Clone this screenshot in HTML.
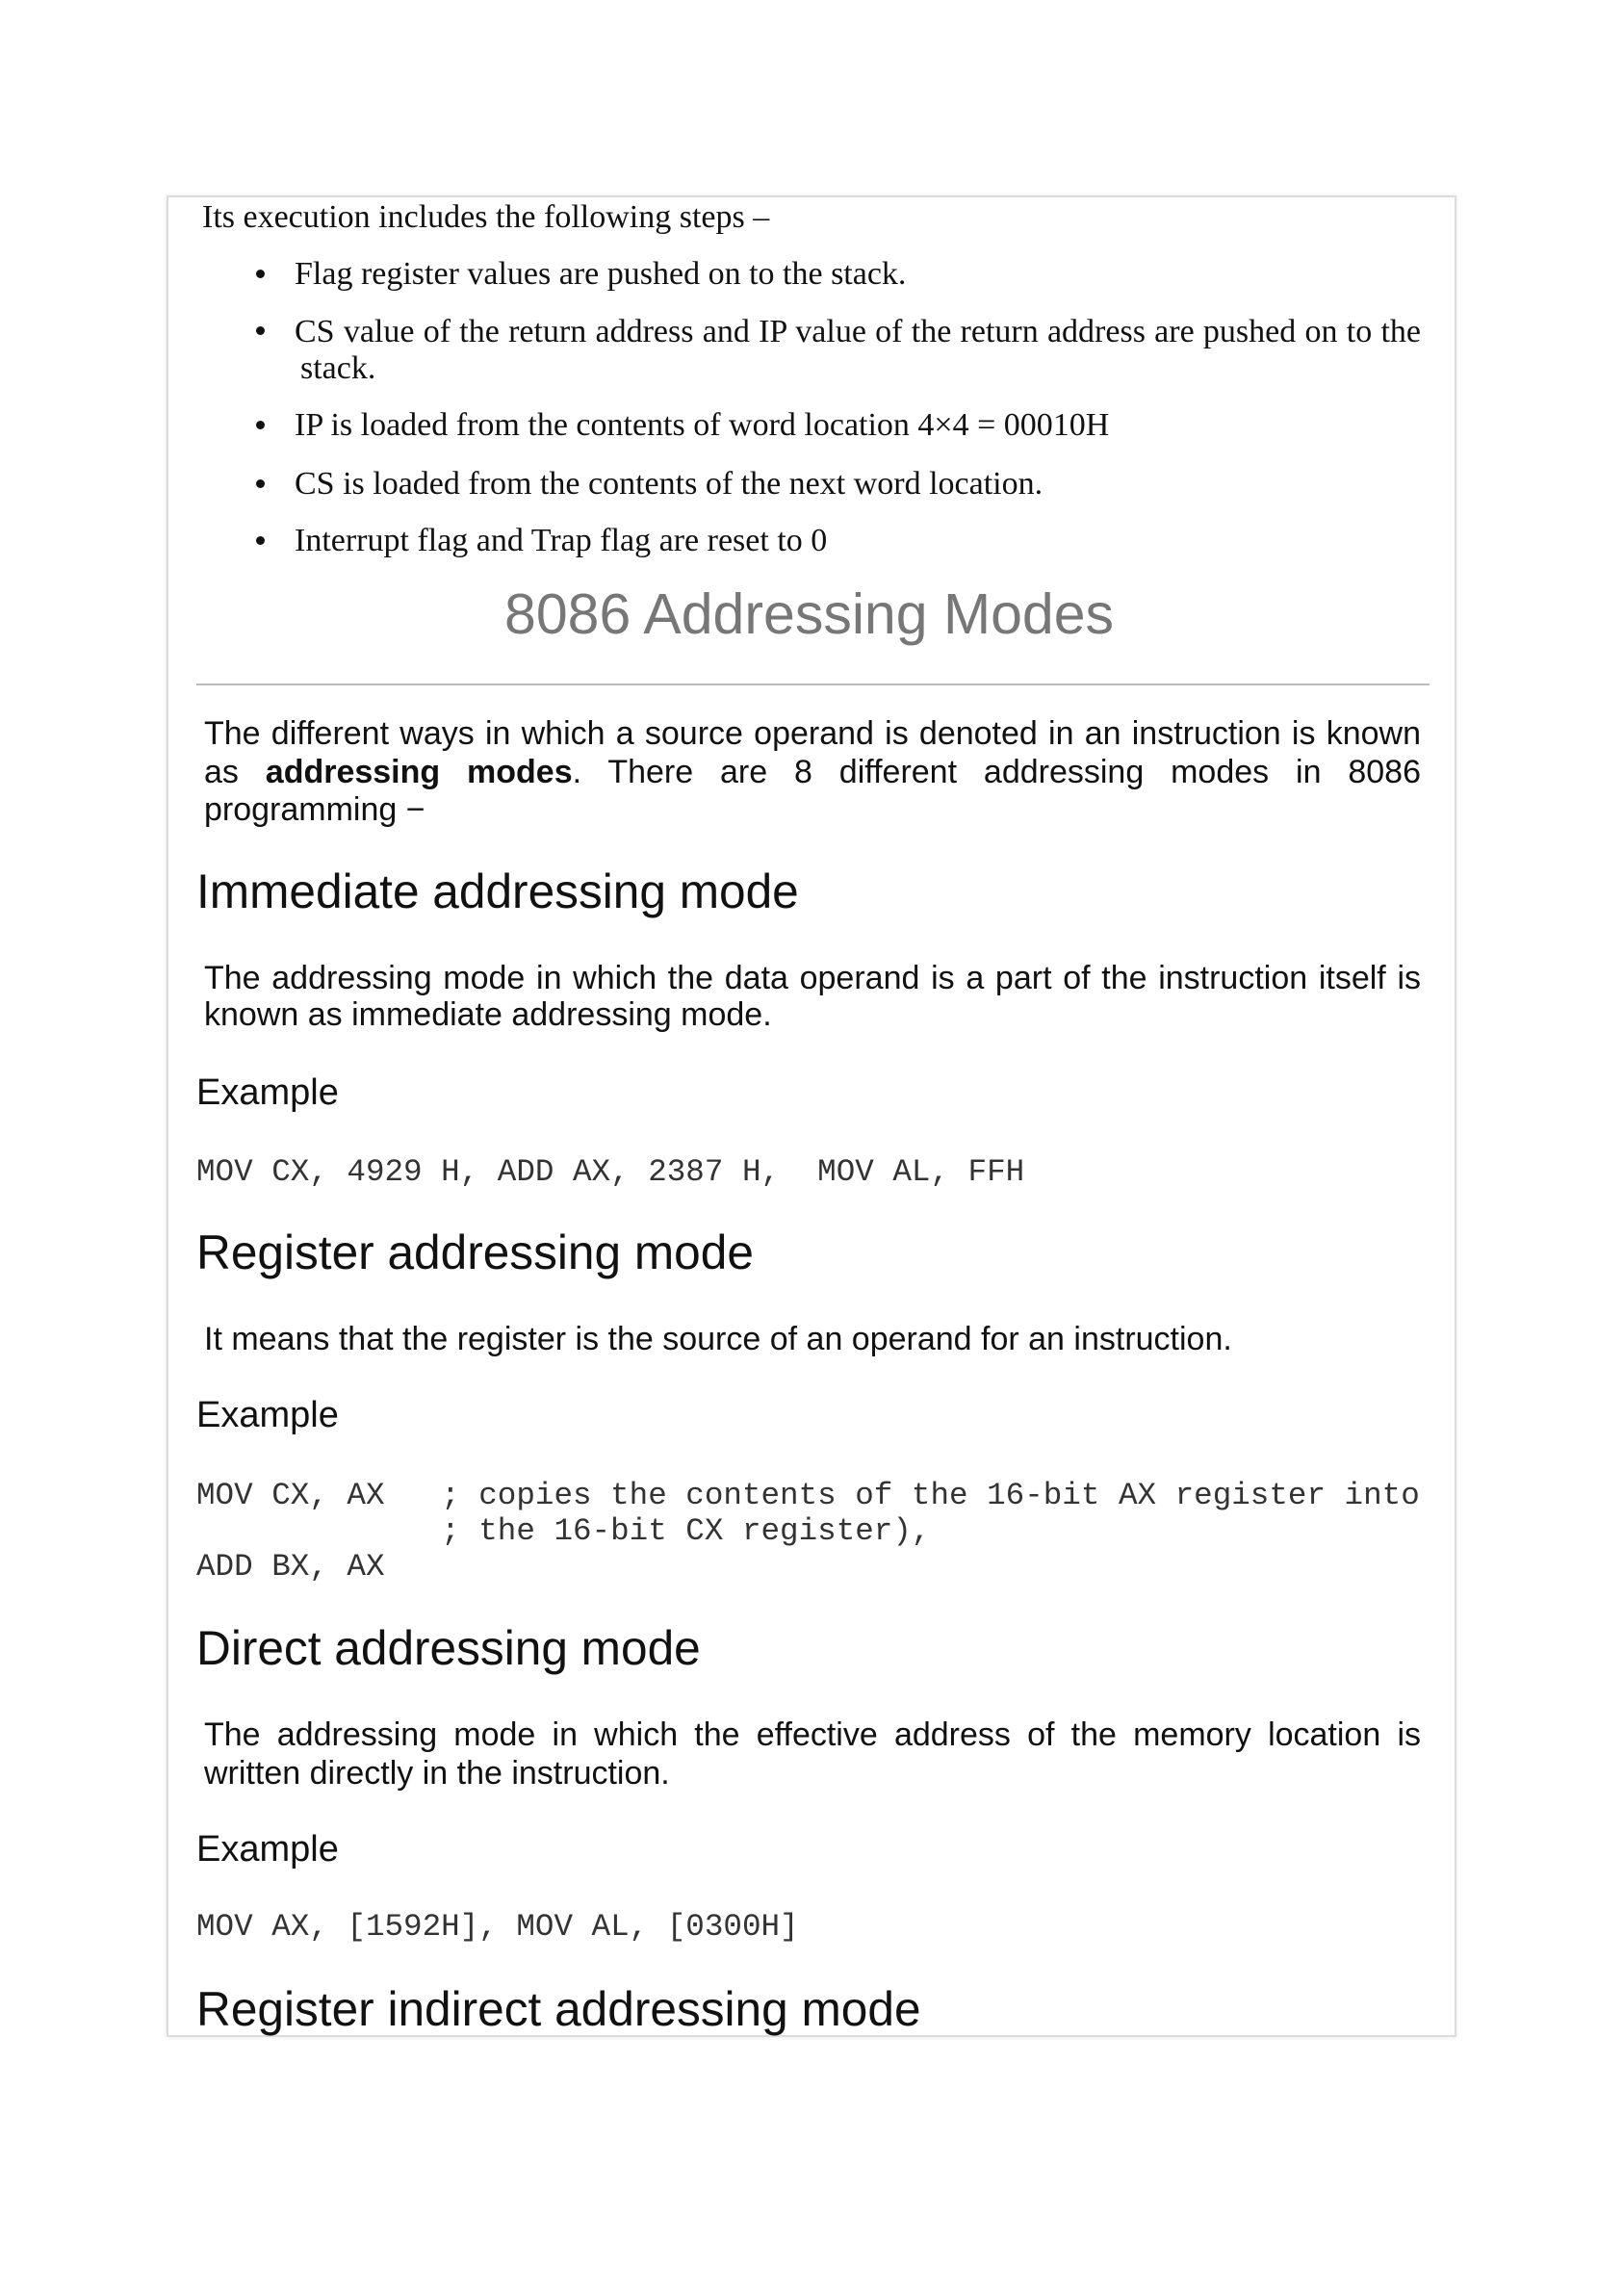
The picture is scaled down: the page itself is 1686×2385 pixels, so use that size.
<!DOCTYPE html>
<html><head><meta charset="utf-8"><style>
html,body{margin:0;padding:0;background:#fff;}
body{width:1686px;height:2385px;position:relative;overflow:hidden;}
.box{position:absolute;left:173px;top:203px;width:1336px;height:1909px;border:2px solid #dcdcdc;box-shadow:0 0 4px #e6e6e6;}
.t{position:absolute;line-height:1;white-space:nowrap;color:#111;}
.s{font-family:"Liberation Serif",serif;font-size:34px;}
.a{font-family:"Liberation Sans",sans-serif;font-size:34px;}
.h{font-family:"Liberation Sans",sans-serif;font-size:49.6px;}
.e{font-family:"Liberation Sans",sans-serif;font-size:38px;}
.m{font-family:"Liberation Mono",monospace;font-size:32.6px;color:#333;white-space:pre;}
.dot{position:absolute;width:9px;height:9px;border-radius:50%;background:#111;left:266px;}
.j{text-align:justify;text-align-last:justify;width:1264px;}
</style></head><body>
<div class="box"></div>
<div class="t s" style="left:210px;top:209px">Its execution includes the following steps –</div>
<div class="dot" style="top:280px"></div><div class="t s" style="left:306px;top:268px">Flag register values are pushed on to the stack.</div>
<div class="dot" style="top:339px"></div><div class="t s j" style="left:306px;top:328px;width:1170px">CS value of the return address and IP value of the return address are pushed on to the</div>
<div class="t s" style="left:312px;top:366px">stack.</div>
<div class="dot" style="top:437px"></div><div class="t s" style="left:306px;top:425px">IP is loaded from the contents of word location 4×4 = 00010H</div>
<div class="dot" style="top:498px"></div><div class="t s" style="left:306px;top:486px">CS is loaded from the contents of the next word location.</div>
<div class="dot" style="top:557px"></div><div class="t s" style="left:306px;top:545px">Interrupt flag and Trap flag are reset to 0</div>
<div class="t" style="left:524px;top:609px;font-family:'Liberation Sans',sans-serif;font-size:59px;color:#777">8086 Addressing Modes</div>
<div style="position:absolute;left:204px;top:710px;width:1281px;height:2px;background:#bbb"></div>
<div class="t a j" style="left:212px;top:745px">The different ways in which a source operand is denoted in an instruction is known</div>
<div class="t a j" style="left:212px;top:785px">as <b>addressing modes</b>. There are 8 different addressing modes in 8086</div>
<div class="t a" style="left:212px;top:824px">programming −</div>
<div class="t h" style="left:204px;top:902px">Immediate addressing mode</div>
<div class="t a j" style="left:212px;top:999px">The addressing mode in which the data operand is a part of the instruction itself is</div>
<div class="t a" style="left:212px;top:1037px">known as immediate addressing mode.</div>
<div class="t e" style="left:204px;top:1116px">Example</div>
<div class="t m" style="left:204px;top:1202px">MOV CX, 4929 H, ADD AX, 2387 H,  MOV AL, FFH</div>
<div class="t h" style="left:204px;top:1277px">Register addressing mode</div>
<div class="t a" style="left:212px;top:1374px">It means that the register is the source of an operand for an instruction.</div>
<div class="t e" style="left:204px;top:1451px">Example</div>
<div class="t m" style="left:204px;top:1538px">MOV CX, AX   ; copies the contents of the 16-bit AX register into</div>
<div class="t m" style="left:204px;top:1575px">             ; the 16-bit CX register),</div>
<div class="t m" style="left:204px;top:1612px">ADD BX, AX</div>
<div class="t h" style="left:204px;top:1688px">Direct addressing mode</div>
<div class="t a j" style="left:212px;top:1785px">The addressing mode in which the effective address of the memory location is</div>
<div class="t a" style="left:212px;top:1825px">written directly in the instruction.</div>
<div class="t e" style="left:204px;top:1902px">Example</div>
<div class="t m" style="left:204px;top:1986px">MOV AX, [1592H], MOV AL, [0300H]</div>
<div class="t h" style="left:204px;top:2063px">Register indirect addressing mode</div>
</body></html>
